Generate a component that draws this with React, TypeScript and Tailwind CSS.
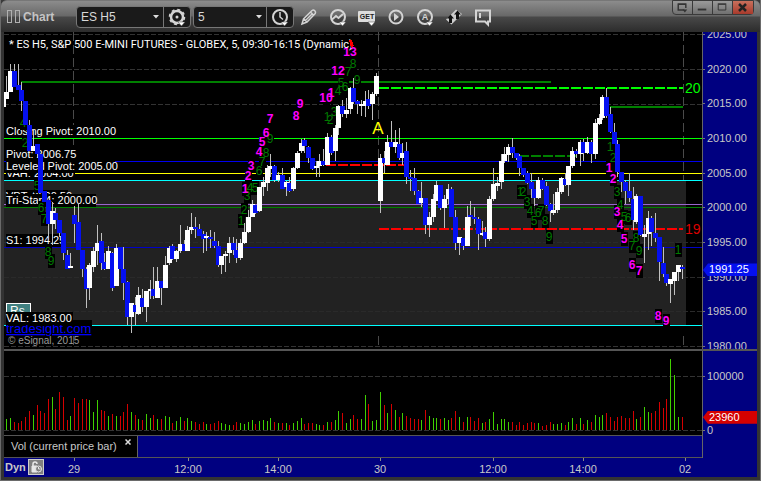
import { ReactNode } from "react";

// [high, open, close, low] as y coordinates in the price pane
type Bar = [number, number, number, number];

const BARS: Bar[] = [
  [95, 107, 96, 118], [76, 99, 92, 99], [64, 92, 71, 92], [64, 71, 87, 87], [64, 85, 90, 90],
  [82, 90, 101, 111], [101, 101, 125, 125], [120, 125, 151, 151], [130, 151, 146, 151], [144, 144, 154, 157],
  [154, 154, 193, 193], [191, 191, 202, 202], [200, 200, 224, 240], [202, 224, 211, 245], [208, 213, 220, 229],
  [220, 220, 233, 237], [233, 233, 253, 260], [250, 255, 269, 269], [253, 268, 266, 268], [206, 215, 224, 243],
  [203, 222, 250, 250], [250, 250, 269, 277], [267, 269, 289, 308], [263, 288, 265, 300], [247, 267, 251, 272],
  [225, 251, 243, 265], [233, 241, 263, 270], [253, 262, 269, 270], [246, 269, 251, 269], [252, 253, 288, 291],
  [244, 286, 248, 286], [247, 247, 269, 269], [247, 269, 283, 300], [281, 282, 317, 325], [303, 317, 303, 333],
  [297, 305, 312, 325], [287, 314, 295, 315], [289, 298, 307, 312], [291, 307, 291, 322], [280, 291, 289, 299],
  [267, 289, 296, 299], [267, 298, 281, 298], [281, 281, 288, 305], [256, 288, 265, 288], [246, 263, 248, 265],
  [244, 246, 259, 260], [250, 259, 251, 262], [225, 251, 244, 253], [240, 244, 251, 251], [226, 251, 230, 251],
  [213, 230, 227, 234], [217, 227, 229, 238], [224, 229, 236, 236], [231, 234, 239, 253], [232, 238, 236, 251],
  [230, 237, 239, 248], [232, 241, 246, 248], [241, 246, 265, 267], [256, 265, 256, 274], [251, 256, 254, 272],
  [237, 253, 243, 263], [237, 243, 250, 255], [239, 250, 258, 263], [239, 258, 243, 260], [223, 243, 232, 244],
  [210, 232, 217, 233], [200, 217, 204, 217], [205, 205, 213, 214], [187, 211, 187, 212], [177, 187, 182, 196],
  [165, 183, 168, 191], [154, 169, 166, 177], [165, 166, 180, 182], [172, 180, 175, 182], [168, 175, 189, 189],
  [181, 187, 182, 196], [177, 183, 191, 192], [167, 189, 168, 191], [151, 168, 153, 169], [139, 151, 143, 153],
  [138, 140, 146, 153], [146, 147, 158, 163], [158, 158, 169, 170], [161, 168, 166, 177], [154, 166, 161, 177],
  [149, 161, 165, 166], [133, 165, 137, 165], [135, 137, 153, 155], [125, 151, 128, 161], [105, 128, 106, 135],
  [100, 106, 114, 117], [98, 114, 110, 118], [87, 109, 88, 114], [78, 88, 102, 104], [100, 101, 104, 114],
  [100, 106, 104, 116], [91, 106, 101, 117], [90, 99, 106, 109], [92, 104, 94, 120], [73, 94, 76, 96],
  [154, 201, 158, 213], [151, 158, 163, 173], [135, 165, 142, 165], [121, 142, 147, 147], [130, 147, 142, 153],
  [128, 144, 158, 160], [143, 158, 153, 165], [142, 151, 177, 184], [170, 177, 179, 191], [168, 178, 191, 195],
  [190, 191, 204, 204], [182, 203, 198, 207], [198, 198, 225, 234], [212, 225, 217, 237], [194, 217, 199, 222],
  [181, 201, 185, 201], [185, 185, 208, 210], [195, 208, 199, 228], [184, 199, 189, 204], [187, 189, 217, 217],
  [210, 217, 243, 250], [237, 243, 237, 255], [238, 238, 246, 250], [206, 246, 217, 246], [201, 215, 217, 226],
  [207, 217, 219, 224], [217, 219, 234, 250], [221, 235, 233, 236], [227, 232, 239, 247], [196, 239, 199, 241],
  [168, 199, 184, 201], [177, 186, 183, 191], [154, 182, 161, 189], [147, 161, 154, 163], [144, 155, 147, 162],
  [138, 147, 153, 158], [153, 153, 158, 160], [154, 156, 168, 176], [168, 168, 175, 177], [171, 173, 183, 184],
  [173, 182, 189, 198], [189, 189, 198, 206], [177, 198, 180, 199], [178, 180, 189, 190], [182, 186, 205, 206],
  [203, 204, 211, 222], [194, 213, 210, 215], [188, 210, 192, 213], [177, 192, 178, 194], [173, 179, 185, 186],
  [166, 185, 166, 196], [147, 166, 151, 168], [149, 151, 154, 158], [140, 154, 142, 166], [139, 142, 153, 161],
  [137, 153, 142, 154], [140, 142, 154, 163], [119, 154, 123, 159], [114, 124, 118, 125], [95, 118, 97, 120],
  [88, 97, 116, 118], [107, 114, 132, 133], [123, 132, 144, 144], [140, 144, 172, 177], [172, 172, 182, 192],
  [180, 182, 191, 204], [173, 191, 198, 202], [187, 199, 220, 230], [194, 222, 196, 224], [196, 196, 235, 236],
  [225, 237, 234, 263], [211, 234, 218, 250], [216, 218, 232, 246], [213, 233, 238, 242], [237, 237, 262, 281],
  [247, 263, 274, 277], [274, 274, 283, 286], [279, 284, 279, 303], [272, 281, 272, 295], [265, 272, 265, 281],
  [265, 267, 269, 279],
];

// bar heights, negative for a down bar
const VOLUME = [
  12, 11, 12, -8, -7, -9, -13, -19, 15, -25, -19, -17, -31, 33, -21, -38, -33, -10, 14, -32,
  -27, -31, -31, 30, 18, 30, -20, -19, 14, -16, 14, -14, -18, -26, 18, -15, 11, -10, 16, 12,
  -15, 11, -11, 14, 13, -7, 9, 13, -9, 12, 9, -8, -6, -8, 6, -6, -7, -9, 7, 6,
  5, -5, -8, 7, 6, 8, 10, -6, 9, 10, 9, 12, -8, 7, -7, 7, -5, 7, 9, 12,
  -6, -7, -7, 6, 5, -5, 8, -8, 10, 19, -17, 7, 11, -15, -11, 11, 35, -26, 9, 10,
  38, -25, 17, -26, 20, -13, 17, -14, -12, -11, -11, 10, -20, 14, 12, 12, -11, 12, 10, -12,
  -19, 13, -8, 13, -13, -9, -12, 7, -8, 11, 18, 6, 11, 11, 8, -8, -5, -8, -5, -7,
  -8, -7, 7, -4, -5, -8, 6, 6, 7, -5, 8, 12, -6, 12, -6, 10, -8, 15, 13, 15,
  -17, -13, -9, -13, -14, -12, -12, -19, 11, -13, 23, 18, -17, -19, -28, -22, -31, 71, 55, 13,
  -13,
];

const barX = (i: number) => Math.round(2.6 + i * 3.772);

// [text, center x, baseline]
type Mark = [string, number, number];

const SETUP: Mark[] = [
  ["4", 23, 127], ["2", 25, 147], ["5", 37, 190], ["6", 41, 212], ["7", 44, 223], ["8", 48, 256], ["9", 51, 265],
  ["1", 241, 225], ["2", 244, 214], ["3", 247, 200], ["4", 250, 192], ["5", 255, 192], ["6", 259, 175],
  ["7", 262, 166], ["8", 266, 157], ["9", 270, 143],
  ["1", 327, 121], ["2", 330, 124], ["3", 334, 116], ["4", 338, 95], ["5", 341, 87], ["6", 345, 91],
  ["7", 348, 76], ["8", 353, 68], ["9", 357, 84],
  ["1", 520, 196], ["2", 523, 196], ["3", 527, 206], ["4", 530, 215], ["5", 534, 225], ["6", 538, 217],
  ["7", 541, 215], ["8", 545, 225], ["9", 549, 241],
  ["1", 610, 151], ["2", 613, 162], ["3", 617, 196], ["4", 620, 209], ["5", 624, 221], ["6", 628, 222],
  ["7", 632, 250], ["8", 636, 242], ["9", 639, 255],
  ["1", 678, 254],
];

const COUNTDOWN: Mark[] = [
  ["1", 245, 193], ["2", 248, 180], ["3", 251, 170], ["4", 259, 156], ["5", 262, 146], ["6", 266, 137], ["7", 270, 123],
  ["8", 296, 120], ["9", 300, 108], ["10", 326, 102], ["1", 331, 97], ["12", 338, 75], ["13", 350, 56],
  ["1", 609, 172], ["2", 613, 183], ["3", 617, 216], ["4", 620, 229], ["5", 624, 243], ["6", 632, 269],
  ["7", 639, 275], ["8", 658, 320], ["9", 666, 325],
];

// [text, box width, top of box]
const LEVEL_LABELS: [string, number, number][] = [
  ["VAH: 2004.00", 69, 167],
  ["VPT: 2000.50", 62, 190],
  ["Tri-Star 4: 2000.00", 90, 194],
  ["Closing Pivot: 2010.00", 106, 125],
  ["Pivot: 2006.75", 69, 148],
  ["Leveled Pivot: 2005.00", 109, 160],
  ["S1: 1994.25", 57, 234],
];

const PRICES = [2025, 2020, 2015, 2010, 2005, 2000, 1995, 1990, 1985, 1980];
const GRID = [34, 69, 104, 242, 277, 311, 346];

const TIMES: [string, number][] = [
  ["29", 74], ["12:00", 188], ["14:00", 278], ["30", 380], ["12:00", 493], ["14:00", 583], ["02", 685],
];

function PricePane() {
  return (
    <svg viewBox="4 32 698 317" className="block w-full bg-black" shapeRendering="crispEdges" fontSize="11">
      <rect x="4" y="180" width="682" height="145" fill="#222222" />
      {GRID.map((y) => (
        <path
          key={y}
          d={`M4 ${y}.5H702`}
          stroke={y > 180 && y < 325 ? "#2a2a2a" : "#333333"}
          strokeDasharray="5 2"
        />
      ))}
      {[73, 378, 683].map((x) => (
        <path key={x} d={`M${x}.5 32V180M${x}.5 336V348`} stroke="#4a4a4a" strokeDasharray="9 4" />
      ))}

      <rect x="21" y="81" width="530" height="2" fill="#008000" />
      <rect x="610" y="106" width="73" height="2" fill="#008000" />
      <rect x="4" y="138" width="698" height="1" fill="#00ff00" />
      <rect x="4" y="161" width="698" height="1" fill="#0000ee" />
      <rect x="4" y="173" width="698" height="1" fill="#ffff00" />
      <rect x="4" y="180" width="698" height="1" fill="#00ffff" />
      <rect x="4" y="204" width="698" height="1" fill="#9966cc" />
      <rect x="4" y="207" width="698" height="1" fill="#008000" />
      <rect x="4" y="247" width="698" height="1" fill="#0000c8" />
      <rect x="4" y="325" width="698" height="1" fill="#00ffff" />
      <g strokeWidth="2" strokeDasharray="10 2">
        <path d="M379 88H683" stroke="#00ff00" />
        <path d="M519 156H577" stroke="#008000" />
        <path d="M326 165H404" stroke="#ff0000" />
        <path d="M379 229H683" stroke="#ff0000" />
      </g>

      {LEVEL_LABELS.map(([text, width, top]) => (
        <g key={text}>
          <rect x="6" y={top} width={width} height="13" fill="#000000" />
          <text x="6" y={top + 10} fill="#ffffff">
            {text}
          </text>
        </g>
      ))}

      <rect x="6" y="303" width="25" height="16" fill="#ffffff" />
      <rect x="7" y="304" width="23" height="15" fill="#408080" />
      <text x="10" y="315" fill="#ffffff" fontSize="12">
        Rs
      </text>
      <rect x="6" y="320" width="86" height="15" fill="#000000" />
      <a href="#tradesight">
        <text x="6" y="333" fill="#0000ff" fontSize="13" textDecoration="underline">
          tradesight.com
        </text>
      </a>
      <rect x="6" y="312" width="67" height="13" fill="#000000" />
      <text x="6" y="322" fill="#ffffff">
        VAL: 1983.00
      </text>
      <text x="8" y="344" fill="#999999" fontSize="10">
        © eSignal, 2015
      </text>

      {[...SETUP, ...COUNTDOWN].map(([, x, y], i) => (
        <rect key={i} x={x - 3} y={y - 11} width="7" height="14" fill="#000000" />
      ))}
      <g fontSize="12" textAnchor="middle">
        {SETUP.map(([text, x, y], i) => (
          <text key={i} x={x} y={y} fill="#007a00">
            {text}
          </text>
        ))}
        {COUNTDOWN.map(([text, x, y], i) => (
          <text key={i} x={x} y={y} fill="#ff00ff" fontWeight="bold">
            {text}
          </text>
        ))}
      </g>

      {BARS.map(([high, open, close, low], i) => (
        <g key={i}>
          <rect x={barX(i)} y={high} width="1" height={low - high} fill="#c0c0c0" />
          <rect
            x={barX(i) - 2}
            y={Math.min(open, close)}
            width="5"
            height={Math.max(2, Math.abs(close - open))}
            fill={close > open ? "#0510f0" : "#ffffff"}
          />
        </g>
      ))}

      <text x="378" y="134" textAnchor="middle" fontSize="17" fill="#ffff00">
        A
      </text>
      <text x="9" y="48" fill="#ffffff" className="font-[Roboto,sans-serif]">
        * ES H5, S&amp;P 500 E-MINI FUTURES - GLOBEX, 5, 09:30-16:15 (Dynamic)
      </text>
      <path d="M349 40L352 40L354 46L351 48Z" fill="#ff0000" />
      <text x="685" y="93" fontSize="14" fill="#00ff00">
        20
      </text>
      <text x="685" y="234" fontSize="14" fill="#dd0000">
        19
      </text>
    </svg>
  );
}

function VolumePane() {
  return (
    <svg viewBox="4 351 698 84" className="block w-full bg-black" shapeRendering="crispEdges">
      <path d="M4 376.5H702M4 430.5H702" stroke="#333333" strokeDasharray="5 2" />
      {VOLUME.map((v, i) => (
        <rect
          key={i}
          x={barX(i)}
          y={430 - Math.abs(v)}
          width="1"
          height={Math.abs(v)}
          fill={v > 0 ? "#40d000" : "#d40000"}
        />
      ))}
    </svg>
  );
}

function AxisLabel({ children }: { children: ReactNode }) {
  return (
    <div className="flex h-[5px] items-center gap-0.5 leading-[5px]">
      <span className="h-px w-0.5 bg-[#777]" />
      <span>{children}</span>
    </div>
  );
}

function IconButton({ label, children }: { label: string; children: ReactNode }) {
  return (
    <button aria-label={label} className="flex h-5 w-5 items-center justify-center text-[#d4d4d4]">
      <svg viewBox="0 0 20 20" className="h-5 w-5" fill="none" stroke="currentColor" strokeWidth="2">
        {children}
      </svg>
    </button>
  );
}

const Corner = () => <path d="M11 15h7l-3.5 4z" fill="#fff" stroke="#444" strokeWidth="0.5" />;

function Picker({ label, value, width, children }: { label: string; value: string; width: string; children: ReactNode }) {
  return (
    <div className="flex h-[22px] rounded-sm border border-[#777] bg-[#1a1a1a]">
      <div className={`relative ${width}`}>
        <select
          aria-label={label}
          className="h-full w-full appearance-none bg-transparent pl-1 text-[12px] text-[#d8d8d8] outline-none"
        >
          <option>{value}</option>
        </select>
        <svg viewBox="0 0 6 4" className="pointer-events-none absolute top-2 right-1 h-1 w-1.5" fill="#ddd">
          <path d="M0 0h6L3 3.5z" />
        </svg>
      </div>
      <div className="flex w-[27px] items-center justify-center border-l border-[#777]">{children}</div>
    </div>
  );
}

function TitleBar() {
  return (
    <header className="relative flex h-8 items-center rounded-t-md border-t border-[#777] bg-[linear-gradient(#8c8c8c_0%,#686868_48%,#484848_52%,#2c2c2c_100%)] pl-1.5">
      <svg viewBox="0 0 13 14" className="h-3.5 w-[13px]" fill="none" stroke="#b0b0b0" shapeRendering="crispEdges">
        <path d="M.5 .5h4v12h-4zM8.5 .5h4v12h-4z" />
      </svg>
      <h1 className="ml-[3px] w-[53px] text-[12px] font-bold text-[#c4c4c4]">Chart</h1>

      <div className="flex gap-0.5">
        <Picker label="Symbol" value="ES H5" width="w-[86px]">
          <IconButton label="Symbol settings">
            <circle cx="10" cy="10" r="6" strokeWidth="2.5" />
            <circle cx="10" cy="10" r="7.5" strokeWidth="1.5" strokeDasharray="3 2.9" />
            <circle cx="10" cy="10" r="1.5" fill="currentColor" stroke="none" />
            <Corner />
          </IconButton>
        </Picker>
        <Picker label="Interval" value="5" width="w-[72px]">
          <IconButton label="Time template">
            <circle cx="10" cy="10" r="7" />
            <path d="M10 5v5l3 2.5" strokeWidth="1.5" />
            <Corner />
          </IconButton>
        </Picker>
      </div>

      <nav aria-label="Chart tools" className="ml-[5px] flex gap-[9px]">
        <IconButton label="Draw">
          <path d="M3 17l1.500-5 8.500-8.500q1.500-1 2.800.3t.4 2.700L8 15zM11.500 5l3.200 3.200M5 12l3 3M6.500 13.500l7-7" strokeWidth="1.5" />
        </IconButton>
        <IconButton label="Studies">
          <circle cx="10" cy="10" r="7" />
          <path d="M4 12.500L8 9l2.500 2L15 7" />
          <Corner />
        </IconButton>
        <IconButton label="Get studies">
          <rect x="1" y="4" width="17" height="11" rx="1" fill="#ddd" stroke="none" />
          <text x="10" y="12" textAnchor="middle" fontSize="7" fontWeight="bold" fill="#222" stroke="none">
            GET
          </text>
          <Corner />
        </IconButton>
        <IconButton label="Play">
          <circle cx="10" cy="10" r="6.5" />
          <path d="M8 6v8l5-4z" fill="currentColor" stroke="none" />
        </IconButton>
        <IconButton label="Alerts">
          <circle cx="10" cy="10" r="7" />
          <text x="10" y="13" textAnchor="middle" fontSize="9" fontWeight="bold" fill="currentColor" stroke="none">
            A
          </text>
          <Corner />
        </IconButton>
        <IconButton label="Trade">
          <path d="M2 12.5L12 2.5l6 4.500L7.500 17.500z" fill="#ccc" stroke="none" />
          <path d="M6.500 7.500l3.500 4H8v4.500H5v-4.500H3zM13.500 3.500l3.500 4h-2v4.500h-3V7.500h-2z" fill="#111" stroke="none" />
        </IconButton>
        <IconButton label="Notes">
          <path d="M3 3.500h14v11h-2v3l-3-3H3zM7 6v5" />
        </IconButton>
      </nav>

      <div className="absolute -top-px right-1.5 flex h-[15px] rounded-b-sm border border-[#3a3a3a] bg-[linear-gradient(#9a9a9a,#707070)]">
        <button aria-label="Dock" className="w-5 border-r border-[#3a3a3a]">
          <svg viewBox="0 0 20 13" className="w-full" fill="none" stroke="#333">
            <path d="M12 9.500H5.500v-6h8v4M5 3h9" strokeWidth="1.500" />
            <path d="M10 9h5l-2.500 3z" fill="#333" stroke="none" />
          </svg>
        </button>
        <button aria-label="Minimize" className="w-5 border-r border-[#3a3a3a]">
          <svg viewBox="0 0 20 13" className="w-full" fill="#333">
            <path d="M5 8h9v2H5z" />
          </svg>
        </button>
        <button aria-label="Maximize" className="w-5 border-r border-[#3a3a3a]">
          <svg viewBox="0 0 20 13" className="w-full" fill="none" stroke="#333">
            <path d="M5.500 3.500h8v6h-8zM5 3h9" />
          </svg>
        </button>
        <button aria-label="Close" className="w-5 bg-[linear-gradient(#c8705c,#a83a2c)]">
          <svg viewBox="0 0 20 13" className="w-full" stroke="#222" strokeWidth="2.500">
            <path d="M6 3l7 7M13 3l-7 7" />
          </svg>
        </button>
      </div>
    </header>
  );
}

export default function App() {
  return (
    <div className="border-x border-b border-[#6a6a6a] bg-[#3a3a3a] font-['Liberation_Sans',Arial,sans-serif] text-[11px] text-[#c8c8c8]">
      <TitleBar />

      <main className="border-x-3 border-b-3 border-[#333] bg-[#000080]">
        <div className="grid grid-cols-[minmax(0,1fr)_55px]">
          <PricePane />
          <div className="relative overflow-hidden border-l border-[#666]">
            <div className="flex h-full flex-col justify-between">
              {PRICES.map((p) => (
                <AxisLabel key={p}>{p.toFixed(2)}</AxisLabel>
              ))}
            </div>
            <div className="absolute top-[73%] left-0 h-[13px] w-full bg-[#0510f0] pl-1.5 leading-[13px] text-white [clip-path:polygon(0_50%,5px_0,100%_0,100%_100%,5px_100%)]">
              1991.25
            </div>
          </div>

          <div className="col-span-2 h-0.5 bg-[#555]" />

          <VolumePane />
          <div className="relative border-l border-[#666]">
            <div className="flex h-full flex-col justify-between pt-[23px] pb-0.5">
              <AxisLabel>100000</AxisLabel>
              <AxisLabel>0</AxisLabel>
            </div>
            <div className="absolute top-[71%] left-0 h-[13px] w-full bg-[#d40000] pl-1.5 leading-[13px] text-white [clip-path:polygon(0_50%,5px_0,100%_0,100%_100%,5px_100%)]">
              23960
            </div>
          </div>

          <div className="flex h-[23px] border-y border-[#555]">
            <div className="flex gap-2 border-r border-[#666] bg-black pr-1.5 pl-[7px]">
              <span className="leading-[21px]">Vol (current price bar)</span>
              <button aria-label="Close Vol" className="flex pt-[3px]">
                <svg viewBox="0 0 6 6" className="h-1.5 w-1.5" stroke="#ddd" strokeWidth="1.500">
                  <path d="M.5 .5l5 5M5.500 .5l-5 5" />
                </svg>
              </button>
            </div>
          </div>
          <div className="border-l border-[#666]" />
        </div>

        <footer className="relative pr-[55px]">
          <svg viewBox="4 458 698 19" className="block w-full" fontSize="11" fill="#c8c8c8">
            {TIMES.map(([text, x]) => (
              <g key={x}>
                <rect x={x} y="458" width="1" height="3" fill="#888" />
                <text x={x} y="473" textAnchor="middle">
                  {text}
                </text>
              </g>
            ))}
          </svg>
          <div className="absolute top-px left-px flex items-center gap-0.5">
            <span className="text-[11px] font-bold">Dyn</span>
            <button
              aria-label="Lock time axis"
              className="flex h-4 w-4 items-center justify-center border border-[#ccc] bg-[#808080]"
            >
              <svg viewBox="0 0 14 14" className="h-3.5 w-3.5" fill="none" stroke="#e8e8e8">
                <path d="M4 6V4q0-2 2-2t2 2" strokeWidth="1.500" />
                <path d="M3 6h5v6H3z" fill="#e8e8e8" />
                <circle cx="9.500" cy="9" r="3" fill="#808080" />
                <path d="M9.500 7v2h2" />
              </svg>
            </button>
          </div>
        </footer>
      </main>
    </div>
  );
}
